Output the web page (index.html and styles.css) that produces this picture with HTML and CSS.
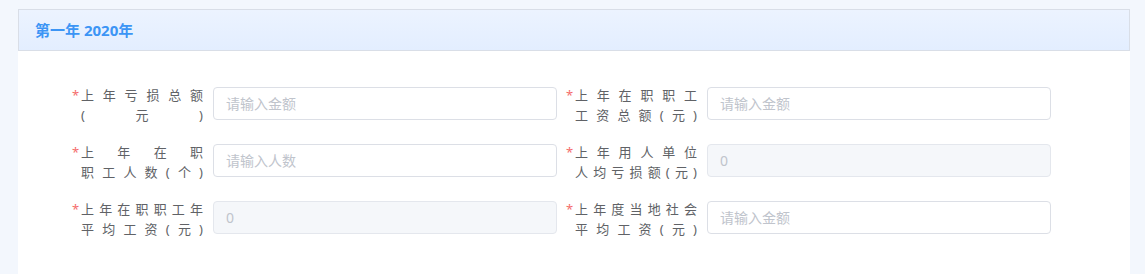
FILE: index.html
```html
<!DOCTYPE html>
<html lang="zh-CN">
<head>
<meta charset="UTF-8">
<meta name="viewport" content="width=device-width, initial-scale=1.0">
<title>第一年 2020年</title>
<link rel="stylesheet" href="styles.css">
</head>
<body>

<div class="card">
  <div class="card-header">第一年 2020年</div>
  <div class="card-body">
    <div class="form-grid">
      <div class="form-item">
        <label class="form-label"><span class="star">*</span><span class="label-text"><span>上年亏损总额</span><span>(元)</span></span></label>
        <input class="form-input" type="text" placeholder="请输入金额">
      </div>
      <div class="form-item">
        <label class="form-label"><span class="star">*</span><span class="label-text"><span>上年在职职工</span><span>工资总额(元)</span></span></label>
        <input class="form-input" type="text" placeholder="请输入金额">
      </div>
      <div class="form-item">
        <label class="form-label"><span class="star">*</span><span class="label-text"><span>上年在职</span><span>职工人数(个)</span></span></label>
        <input class="form-input" type="text" placeholder="请输入人数">
      </div>
      <div class="form-item">
        <label class="form-label"><span class="star">*</span><span class="label-text"><span>上年用人单位</span><span>人均亏损额(元)</span></span></label>
        <input class="form-input" type="text" value="0" disabled>
      </div>
      <div class="form-item">
        <label class="form-label"><span class="star">*</span><span class="label-text"><span>上年在职职工年</span><span>平均工资(元)</span></span></label>
        <input class="form-input" type="text" value="0" disabled>
      </div>
      <div class="form-item">
        <label class="form-label"><span class="star">*</span><span class="label-text"><span>上年度当地社会</span><span>平均工资(元)</span></span></label>
        <input class="form-input" type="text" placeholder="请输入金额">
      </div>
    </div>
  </div>
</div>

</body>
</html>
```

FILE: styles.css
```css
body {
  font-family: "Noto Sans", "Noto Sans CJK SC", sans-serif;
  background-color: #f3f7fd;
  margin: 0;
  padding: 9px 15px 0 18px;
  height: 274px;
  box-sizing: border-box;
  overflow: hidden;
}
.card {
  background-color: #fff;
  height: 265px;
}
.card-header {
  height: 40px;
  line-height: 40px;
  padding-left: 16px;
  border: 1px solid #d9dee7;
  background: linear-gradient(180deg, #ecf3ff 0%, #e3eeff 100%);
  color: #3c95f5;
  font-size: 15px;
  font-weight: bold;
}
.card-body {
  padding: 31px 0 0 52px;
}
.form-grid {
  display: grid;
  grid-template-columns: 487px 487px;
  column-gap: 7px;
  row-gap: 14px;
}
.form-item {
  display: flex;
  align-items: center;
}
.form-label {
  display: flex;
  align-items: flex-start;
  width: 133px;
  padding-right: 10px;
  padding-top: 3px;
  color: #606266;
  font-size: 13px;
  line-height: 20px;
}
.star {
  color: #f56c6c;
  width: 11px;
  padding-left: 2px;
  box-sizing: border-box;
}
.label-text {
  width: 122px;
  display: flex;
  flex-direction: column;
}
.label-text span {
  text-align: justify;
  text-align-last: justify;
}
.form-input {
  width: 344px;
  height: 33px;
  box-sizing: border-box;
  border: 1px solid #dcdfe6;
  border-radius: 4px;
  padding: 0 12px;
  font-family: "Noto Sans", "Noto Sans CJK SC", sans-serif;
  font-size: 14px;
  color: #606266;
  background-color: #fff;
  outline: none;
}
.form-input::placeholder {
  color: #c0c4cc;
}
.form-input:disabled {
  background-color: #f5f7fa;
  border-color: #e4e7ed;
  color: #c0c4cc;
}
```
